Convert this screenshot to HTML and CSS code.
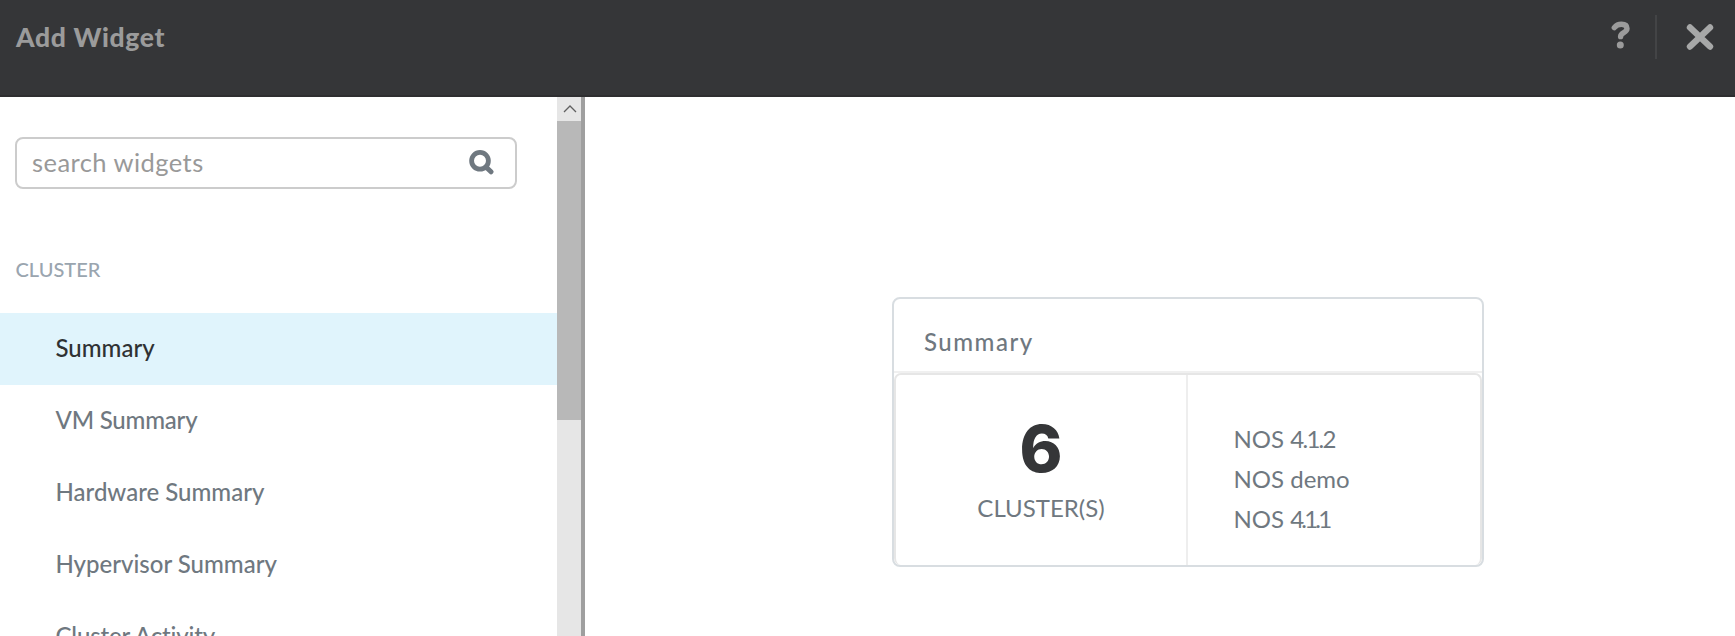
FILE: index.html
```
<!DOCTYPE html>
<html lang="en">
<head>
<meta charset="utf-8">
<title>Add Widget</title>
<link rel="stylesheet" href="styles.css">
</head>
<body>
<header class="topbar">
  <h1 class="title">Add Widget</h1>
  <div class="actions">
    <button class="help" aria-label="Help"><svg width="20" height="28" viewBox="0 0 20 28"><path d="M3.3 6.6Q6 3.2 10.4 3.2Q16 3.2 16 7.6C16 12.2 9.8 11.2 9.6 15.6" fill="none" stroke="#9b9b9b" stroke-width="5.4" stroke-linecap="round" stroke-linejoin="round"/><circle cx="9.3" cy="24" r="3.5" fill="#9b9b9b"/></svg></button>
    <span class="separator"></span>
    <button class="close" aria-label="Close"><svg width="28" height="26" viewBox="0 0 28 26"><path d="M4 3.5L24 22.5M24 3.5L4 22.5" stroke="#a7a8a8" stroke-width="6.4" stroke-linecap="round"/></svg></button>
  </div>
</header>
<div class="content">
  <aside class="sidebar">
    <div class="list">
      <label class="search">
        <input class="search-input" type="text" placeholder="search widgets">
        <svg class="search-icon" width="26" height="26" viewBox="0 0 26 26"><circle cx="12" cy="11.8" r="8.4" fill="none" stroke="#6f7880" stroke-width="4.8"/><path d="M18 18L23 22.8" stroke="#6f7880" stroke-width="5" stroke-linecap="round"/></svg>
      </label>
      <h2 class="group">CLUSTER</h2>
      <ul class="items">
        <li class="item selected">Summary</li>
        <li class="item vm">VM Summary</li>
        <li class="item">Hardware Summary</li>
        <li class="item">Hypervisor Summary</li>
        <li class="item activity">Cluster Activity</li>
      </ul>
    </div>
    <div class="scrollbar">
      <div class="scroll-up"><svg width="14" height="10" viewBox="0 0 14 10"><path d="M1 8L7 2L13 8" fill="none" stroke="#606060" stroke-width="1.3"/></svg></div>
      <div class="thumb"></div>
    </div>
  </aside>
  <main class="preview">
    <section class="card">
      <h3 class="card-title">Summary</h3>
      <div class="card-body">
        <div class="count"><div class="number">6</div><div class="unit">CLUSTER(S)</div></div>
        <div class="versions"><div>NOS <span class="release">4.1.2</span></div><div>NOS demo</div><div>NOS <span class="release narrow">4.1.1</span></div></div>
      </div>
    </section>
  </main>
</div>
</body>
</html>
```
FILE: styles.css
```
* { box-sizing: border-box; }
body {
  margin: 0; height: 636px; overflow: hidden; background: #fff; color: #6f7880;
  font-family: Lato, "Open Sans", sans-serif; font-size: 24px; font-variant-ligatures: none;
  display: flex; flex-direction: column;
}
h1, h2, h3, ul { margin: 0; padding: 0; }
ul { list-style: none; }
button { background: none; border: 0; padding: 0; display: flex; }
.topbar {
  height: 97px; flex: none; background: #353638; border-bottom: 2px solid #2e2e30;
  display: flex; justify-content: space-between; align-items: flex-start;
  padding: 15px 21px 0 16px;
}
.title { font-size: 26.5px; line-height: 44px; font-weight: 900; letter-spacing: .65px; color: #9b9b9b; }
.actions { display: flex; align-items: center; height: 44px; }
.help { margin-right: 24px; margin-top: -5px; }
.separator { width: 2px; height: 44px; background: #434446; margin-right: 29px; }
.close { margin-top: -1px; }
.content { flex: 1; display: flex; min-height: 0; }
.sidebar { width: 585px; flex: none; display: flex; border-right: 4px solid #9f9f9f; }
.list { width: 557px; padding-top: 40px; overflow: hidden; }
.search {
  margin-left: 15px; width: 502px; height: 52px; border: 2px solid #ccc; border-radius: 8px;
  display: flex; align-items: center; justify-content: space-between; padding: 0 21px 2px 15px;
}
.search-input { border: 0; outline: 0; padding: 0; width: 380px; font: 400 25.5px/40px Lato, sans-serif; letter-spacing: .45px; background: none; }
.search-input::placeholder { color: #999; opacity: 1; }
.group { margin: 60px 0 0 15.5px; height: 64px; font-size: 20px; line-height: 40px; font-weight: 500; color: #9aa5af; }
.item { height: 72px; line-height: 70px; padding-left: 55.5px; font-weight: 500; }
.vm { letter-spacing: -.2px; }
.activity { letter-spacing: -.15px; }
.selected { background: #e0f4fc; color: #2f3133; }
.scrollbar { width: 24px; background: #e6e6e6; }
.scroll-up { height: 24px; display: flex; align-items: center; justify-content: center; padding-left: 1px; }
.thumb { height: 299px; background: #b8b8b8; }
.preview { flex: 1; padding: 200px 0 0 307px; }
.card { width: 592px; height: 270px; border: 2px solid #d8dde1; border-radius: 8px; display: flex; flex-direction: column; }
.card-title { height: 74px; border-bottom: 2px solid #f0f0f0; padding: 21px 0 0 30px; font-size: 24px; line-height: 44px; font-weight: 500; letter-spacing: 1.5px; }
.card-body { flex: 1; display: flex; border: 2px solid #e6e6e6; border-bottom: 0; border-radius: 7px; }
.count { width: 292px; border-right: 2px solid #eee; display: flex; flex-direction: column; align-items: center; padding-top: 32px; }
.number { font-family: Inter, sans-serif; font-size: 65px; line-height: 83px; font-weight: 800; color: #353638; }
.unit { line-height: 36px; }
.versions { padding: 44px 0 0 45.5px; line-height: 40px; }
.release { letter-spacing: -1.7px; }
.narrow { letter-spacing: -2.8px; }
```
